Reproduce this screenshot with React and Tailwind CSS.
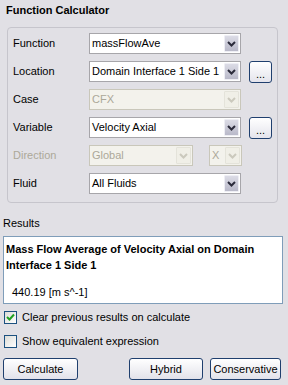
import React from "react";

function Chevron({ color }) {
  return (
    <svg width="9" height="6" viewBox="0 0 9 6">
      <path d="M1 1 L4.5 4.5 L8 1" fill="none" stroke={color} strokeWidth="2" />
    </svg>
  );
}

function Combo({ text, w, disabled, grayText }) {
  return (
    <div
      className={
        "flex h-[21px] items-stretch border " +
        (disabled ? "border-[#c9c7ba] bg-[#f3f2ec] " : "border-[#a7a6aa] bg-white ") +
        w
      }
    >
      <div
        className={
          "flex-1 flex items-center pl-[2px] overflow-hidden whitespace-nowrap " +
          (disabled || grayText ? "text-[#aca899]" : "text-black")
        }
      >
        {text}
      </div>
      <div
        className={
          "my-[1px] mr-[1px] w-[15px] flex items-center justify-center rounded-[1px] border " +
          (disabled
            ? "border-[#e4e3da] bg-[#f0efe7]"
            : "border-[#eeeef4] bg-linear-to-b from-[#dcdce6] to-[#b9b9c9]")
        }
      >
        <Chevron color={disabled ? "#cbc9bd" : "#2b2b3b"} />
      </div>
    </div>
  );
}

function DotsButton() {
  return (
    <div className="ml-[8px] w-[23px] h-[22px] rounded-[3px] border border-[#1f3f6e] bg-linear-to-b from-[#ffffff] to-[#e4e4ec] flex items-end justify-center pb-[4px] text-[11px] leading-[8px]">
      ...
    </div>
  );
}

function Row({ label, labelGray, children }) {
  return (
    <div className="flex items-center h-[21px]">
      <div className={"w-[76px] " + (labelGray ? "text-[#aca899]" : "text-black")}>{label}</div>
      {children}
    </div>
  );
}

function Checkbox({ checked, label }) {
  return (
    <div className="flex items-center h-[13px] pl-[4px]">
      <div className="w-[13px] h-[13px] border border-[#1c5180] bg-linear-to-br from-[#dcdcd7] to-[#ffffff] flex items-center justify-center">
        {checked && (
          <svg width="9" height="9" viewBox="0 0 9 9">
            <path d="M1 4 L3.5 6.5 L8 1.5" fill="none" stroke="#21a121" strokeWidth="2" />
          </svg>
        )}
      </div>
      <div className="ml-[5px]">{label}</div>
    </div>
  );
}

function Button({ label, w }) {
  return (
    <div
      className={
        "h-[22px] rounded-[3px] border border-[#1f3f6e] bg-linear-to-b from-[#ffffff] to-[#e2e2ea] flex items-center justify-center " +
        w
      }
    >
      {label}
    </div>
  );
}

export default function App() {
  return (
    <div
      className="w-[288px] h-[385px] bg-[#e1e0e5] text-[11px] leading-[13px] text-black overflow-hidden"
      style={{ fontFamily: '"Liberation Sans", Arial, sans-serif' }}
    >
      <div className="h-[27px] pl-[6px] pt-[4px] font-bold">Function Calculator</div>
      <div className="ml-[7px] w-[271px] h-[176px] border border-[#c6c5cc] rounded-[4px] pl-[5px] pt-[5px] flex flex-col gap-[7px]">
        <Row label="Function">
          <Combo text="massFlowAve" w="w-[152px]" />
        </Row>
        <Row label="Location">
          <Combo text="Domain Interface 1 Side 1" w="w-[152px]" />
          <DotsButton />
        </Row>
        <Row label="Case">
          <Combo text="CFX" w="w-[152px]" disabled />
        </Row>
        <Row label="Variable">
          <Combo text="Velocity Axial" w="w-[152px]" />
          <DotsButton />
        </Row>
        <Row label="Direction" labelGray>
          <Combo text="Global" w="w-[104px]" disabled />
          <div className="ml-[16px]">
            <Combo text="X" w="w-[33px]" disabled />
          </div>
        </Row>
        <Row label="Fluid">
          <Combo text="All Fluids" w="w-[152px]" />
        </Row>
      </div>
      <div className="pl-[3px] pt-[14px] h-[33px]">Results</div>
      <div className="ml-[3px] w-[280px] h-[68px] border border-[#7f9db9] bg-white pl-[2px] pt-[4px]">
        <div className="font-bold leading-[16px]">
          Mass Flow Average of Velocity Axial on Domain Interface 1 Side 1
        </div>
        <div className="pl-[6px] pt-[13px]">440.19 [m s^-1]</div>
      </div>
      <div className="pt-[7px] flex flex-col gap-[11px]">
        <Checkbox checked label="Clear previous results on calculate" />
        <Checkbox label="Show equivalent expression" />
      </div>
      <div className="flex pt-[10px] pl-[3px] pr-[7px]">
        <Button label="Calculate" w="w-[75px]" />
        <div className="ml-auto flex gap-[7px]">
          <Button label="Hybrid" w="w-[74px]" />
          <Button label="Conservative" w="w-[71px]" />
        </div>
      </div>
    </div>
  );
}
